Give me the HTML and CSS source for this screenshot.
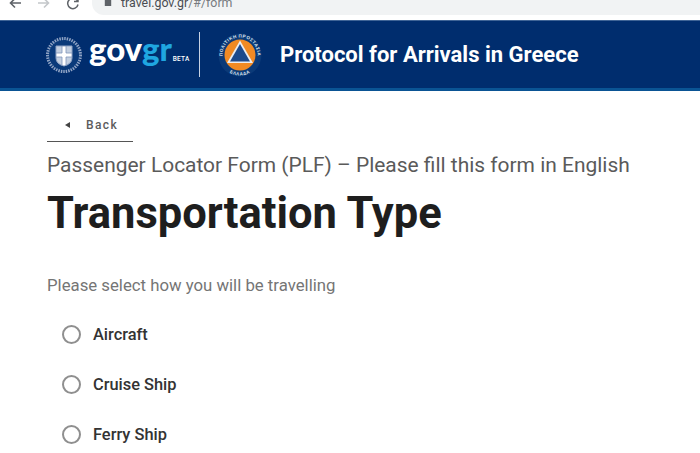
FILE: index.html
```html
<!DOCTYPE html>
<html lang="en">
<head>
  <meta charset="UTF-8" />
  <title>Protocol for Arrivals in Greece</title>
  <link rel="stylesheet" href="styles.css">
</head>
<body>
  <!-- browser toolbar, cut off at the top -->
  <div class="toolbar">
    <svg class="nav-icon" viewBox="0 0 14 14"><path d="M13 6H3M7 1.500 2.500 6 7 10.500" fill="none" stroke="#5f6368" stroke-width="1.600"/></svg>
    <svg class="nav-icon" viewBox="0 0 14 14"><path d="M1 6H11M7 1.500 11.500 6 7 10.500" fill="none" stroke="#c4c7ca" stroke-width="1.600"/></svg>
    <svg class="nav-icon" viewBox="0 0 14 14"><path d="M11.500 4A5.200 5.200 0 1 0 12 7.500M12 .5V4.500H8" fill="none" stroke="#5f6368" stroke-width="1.500"/></svg>
    <div class="address">
      <svg class="lock" viewBox="0 0 10 12"><path d="M1 3h8v8H1z" fill="#5f6368"/></svg>
      <span class="url">travel.gov.gr<span class="url-path">/#/form</span></span>
    </div>
  </div>

  <header class="site-header">
    <svg class="emblem" viewBox="0 0 38 38">
      <circle cx="19" cy="19" r="16.500" fill="#0a3a7a" stroke="#8fa3c4" stroke-width="3" stroke-dasharray="1.500 1"/>
      <path d="M11 10H27V22Q27 28 19 30 11 28 11 22Z" fill="#c3cfe0"/>
      <path d="M17 10H21V30H17ZM11 17H27V21H11Z" fill="#fff"/>
      <path d="M11 10H27V22Q27 28 19 30 11 28 11 22Z" fill="none" stroke="#8fa3c4"/>
      <path d="M17 10V17H11M21 10V17H27M17 30V21H11M21 30V21H27" fill="none" stroke="#7f95ba" stroke-width=".8"/>
    </svg>
    <div class="brand"><span>gov</span><span class="brand-gr">gr</span><span class="beta">BETA</span></div>
    <div class="divider"></div>
    <svg class="civil" viewBox="0 0 44 44">
      <defs>
        <path id="ring-top" d="M5.500 27.800A17.500 17.500 0 1 1 38.500 27.800"/>
        <path id="ring-bottom" d="M7 36A20.500 20.500 0 0 0 37 36"/>
      </defs>
      <circle cx="22" cy="22" r="21.500" fill="#0b3a78"/>
      <text class="civil-text"><textPath href="#ring-top" startOffset="50%" text-anchor="middle">ΠΟΛΙΤΙΚΗ ΠΡΟΣΤΑΣΙΑ</textPath></text>
      <text class="civil-text"><textPath href="#ring-bottom" startOffset="50%" text-anchor="middle">ΕΛΛΑΔΑ</textPath></text>
      <circle cx="22" cy="22" r="15.500" fill="#f08a24"/>
      <path d="M22 7.500 35 30H9Z" fill="#e9edf3"/>
      <path d="M22 11 32 28.500H12Z" fill="#1d4a8c"/>
    </svg>
    <div class="header-title">Protocol for Arrivals in Greece</div>
  </header>

  <main class="content">
    <a class="back" href="#">
      <span class="back-arrow"></span>
      <span>Back</span>
    </a>
    <div class="subtitle">Passenger Locator Form (PLF) – Please fill this form in English</div>
    <h1>Transportation Type</h1>
    <p class="hint">Please select how you will be travelling</p>
    <div class="answers">
      <label class="answer"><span class="radio"></span>Aircraft</label>
      <label class="answer"><span class="radio"></span>Cruise Ship</label>
      <label class="answer"><span class="radio"></span>Ferry Ship</label>
    </div>
  </main>
</body>
</html>
```

FILE: styles.css
```css
html, body {
  height: 100%;
}

body {
  margin: 0;
  font-family: Roboto, sans-serif;
  background: #fff;
  overflow: hidden;
}

.toolbar {
  height: 20px;
  display: flex;
  align-items: flex-start;
  box-sizing: border-box;
  padding-left: 8px;
  gap: 15px;
  overflow: hidden;
  background: #fff;
}

.nav-icon {
  width: 14px;
  height: 14px;
  margin-top: -3px;
  flex: none;
}

.address {
  margin-left: -3px;
  flex: 1;
  height: 15px;
  background: #f1f3f4;
  border-radius: 0 0 0 12px;
  display: flex;
  align-items: flex-start;
  padding-left: 12px;
  gap: 9px;
}

.lock {
  width: 8px;
  height: 10px;
  margin-top: -3px;
  flex: none;
}

.url {
  font-size: 12.400px;
  line-height: 14px;
  margin-top: -4px;
  color: #4a4d52;
}

.url-path {
  color: #777b80;
}

.site-header {
  height: 71px;
  box-sizing: border-box;
  background: #002d6e;
  border-top: 1px solid #3f6496;
  border-bottom: 3px solid #0a5494;
  display: flex;
  align-items: center;
  padding-left: 45px;
}

.emblem {
  width: 38px;
  height: 38px;
  flex: none;
}

.brand {
  margin-left: 6px;
  font-family: Lato, sans-serif;
  font-size: 33px;
  font-weight: 900;
  line-height: 40px;
  letter-spacing: -.1px;
  color: #fff;
  display: flex;
  align-items: baseline;
  width: 110px;
  margin-top: -3px;
}

.brand-gr {
  color: #1fa6e0;
}

.beta {
  font-family: Roboto, sans-serif;
  font-size: 6.500px;
  font-weight: 500;
  letter-spacing: .2px;
  margin-left: 1px;
}

.divider {
  width: 1px;
  height: 45px;
  background: #c7d2e3;
  flex: none;
}

.civil {
  width: 44px;
  height: 44px;
  margin-left: 18px;
  flex: none;
}

.civil-text {
  font-family: "Liberation Sans", sans-serif;
  font-size: 4.500px;
  font-weight: 700;
  letter-spacing: .5px;
  fill: #dfe6f0;
}

.header-title {
  margin-left: 18px;
  font-size: 22px;
  font-weight: 700;
  color: #fff;
  white-space: nowrap;
}

.content {
  padding: 22px 0 0 47px;
}

.back {
  display: flex;
  align-items: center;
  width: 86px;
  height: 29px;
  box-sizing: border-box;
  padding-left: 18px;
  padding-bottom: 5px;
  gap: 16px;
  border-bottom: 1px solid #555;
  font-size: 12px;
  font-weight: 500;
  letter-spacing: 1.400px;
  color: #5c5c5c;
  text-decoration: none;
}

.back-arrow {
  width: 0;
  height: 0;
  border-top: 3.500px solid transparent;
  border-bottom: 3.500px solid transparent;
  border-right: 5px solid #444;
}

.subtitle {
  margin-top: 11px;
  font-size: 20.950px;
  line-height: 24px;
  color: #5a5a5a;
  white-space: nowrap;
}

h1 {
  margin: 11px 0 0;
  font-size: 43.500px;
  line-height: 52px;
  font-weight: 700;
  color: #1e1e1e;
}

.hint {
  margin: 35px 0 0;
  font-size: 16.750px;
  line-height: 20px;
  color: #757575;
}

.answers {
  margin-top: 29px;
  display: flex;
  flex-direction: column;
  gap: 30px;
  padding-left: 15px;
}

.answer {
  display: flex;
  align-items: center;
  height: 20px;
  font-size: 16.400px;
  font-weight: 500;
  color: #333;
}

.radio {
  width: 19px;
  height: 19px;
  box-sizing: border-box;
  border: 2px solid #8f8f8f;
  border-radius: 50%;
  margin-right: 12px;
  flex: none;
}
```
